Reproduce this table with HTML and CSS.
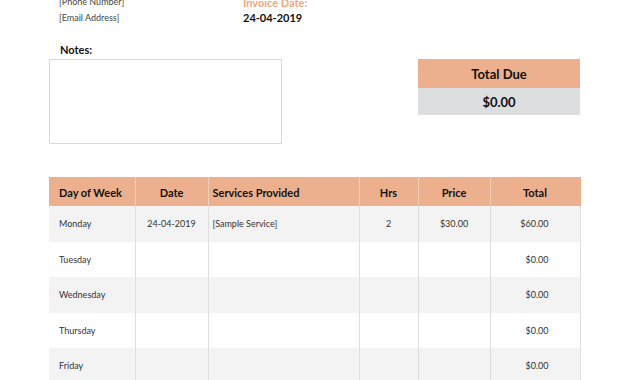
FILE: index.html
```html
<!DOCTYPE html>
<html>
<head>
<meta charset="utf-8">
<link rel="stylesheet" href="styles.css">
</head>
<body>
<div class="page">
  <div class="top">
    <div class="contact">
      <div class="line">[Phone Number]</div>
      <div class="line">[Email Address]</div>
    </div>
    <div class="invoice">
      <div class="line label">Invoice Date:</div>
      <div class="line date">24-04-2019</div>
    </div>
  </div>
  <div class="notes-label">Notes:</div>
  <div class="mid">
    <div class="notes"></div>
    <div class="due">
      <div class="due-head">Total Due</div>
      <div class="due-val">$0.00</div>
    </div>
  </div>
  <table class="grid">
    <colgroup>
      <col class="c1"><col class="c2"><col class="c3"><col class="c4"><col class="c5"><col class="c6">
    </colgroup>
    <thead>
      <tr>
        <th class="left">Day of Week</th>
        <th>Date</th>
        <th class="left svc">Services Provided</th>
        <th>Hrs</th>
        <th>Price</th>
        <th>Total</th>
      </tr>
    </thead>
    <tbody>
      <tr class="shade"><td class="day">Monday</td><td class="ctr">24-04-2019</td><td class="svc">[Sample Service]</td><td class="ctr">2</td><td class="ctr">$30.00</td><td class="amt">$60.00</td></tr>
      <tr><td class="day">Tuesday</td><td></td><td></td><td></td><td></td><td class="amt">$0.00</td></tr>
      <tr class="shade"><td class="day">Wednesday</td><td></td><td></td><td></td><td></td><td class="amt">$0.00</td></tr>
      <tr><td class="day">Thursday</td><td></td><td></td><td></td><td></td><td class="amt">$0.00</td></tr>
      <tr class="shade"><td class="day">Friday</td><td></td><td></td><td></td><td></td><td class="amt">$0.00</td></tr>
    </tbody>
  </table>
</div>
</body>
</html>
```
FILE: styles.css
```css
html, body {
  margin: 0;
  padding: 0;
  background: #fff;
}
body {
  font-family: Lato, "Open Sans", sans-serif;
  color: #222;
  width: 630px;
  height: 380px;
  overflow: hidden;
}
.page {
  padding-left: 49px;
}
.top {
  display: flex;
  margin-top: -6px;
  padding-left: 10px;
}
.contact {
  width: 184px;
}
.line {
  height: 16px;
  line-height: 16px;
  font-size: 9px;
  color: #444;
}
.invoice .label {
  font-size: 11px;
  color: #f0a878;
  font-weight: bold;
  line-height: 17px;
}
.invoice .date {
  font-size: 11px;
  font-weight: bold;
  color: #111;
}
.notes-label {
  margin-top: 15px;
  padding-left: 11px;
  font-size: 11px;
  font-weight: bold;
  color: #111;
  height: 18px;
  line-height: 17px;
}
.mid {
  display: flex;
  align-items: flex-start;
}
.notes {
  width: 231px;
  height: 83px;
  border: 1px solid #d9d9d9;
}
.due {
  margin-left: 136px;
  width: 162px;
  text-align: center;
  font-weight: bold;
  font-size: 13px;
  color: #111;
}
.due-head {
  background: #edb08e;
  height: 29px;
  line-height: 30px;
}
.due-val {
  background: #dddee0;
  height: 27px;
  line-height: 29px;
}
.grid {
  margin-top: 33px;
  border-collapse: collapse;
  table-layout: fixed;
  width: 531px;
}
.c1 { width: 86px; }
.c2 { width: 73px; }
.c3 { width: 151px; }
.c4 { width: 59px; }
.c5 { width: 72px; }
.c6 { width: 90px; }
.grid th {
  background: #edb08e;
  height: 28px;
  padding: 1px 0 0;
  font-size: 11px;
  font-weight: bold;
  color: #111;
  text-align: center;
  border-left: 1px solid #f3cdb7;
}
.grid th:first-child { border-left: none; }
.grid th.left { text-align: left; padding-left: 10px; }
.grid th.svc { padding-left: 4px; }
.grid td {
  height: 35.5px;
  padding: 0;
  font-size: 9px;
  color: #333;
  border-left: 1px solid #dedede;
  text-align: center;
}
.grid td:first-child { border-left: none; }
.grid td:last-child, .grid th:last-child { border-right: 1px solid #dedede; }
.grid th:last-child { border-right-color: #edb08e; }
.grid tr.shade td { background: #f3f3f3; }
.grid td.day { text-align: left; padding-left: 10px; }
.grid td.svc { text-align: left; padding-left: 4px; }
.grid td.amt { text-align: right; padding-right: 31px; }
```
